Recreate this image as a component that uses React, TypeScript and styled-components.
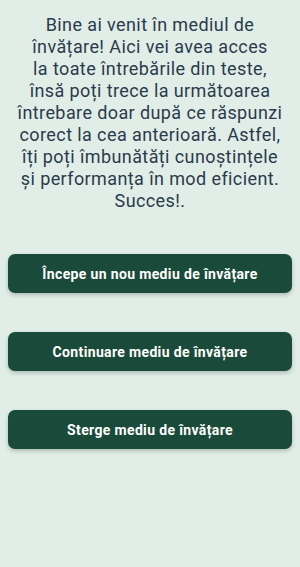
import React from 'react';
import styled, { createGlobalStyle } from 'styled-components';

const GlobalStyle = createGlobalStyle`
  html, body {
    margin: 0;
    padding: 0;
    background: #e0eee7;
  }
  body {
    font-family: Roboto, "Noto Sans", sans-serif;
  }
`;

const Screen = styled.div`
  width: 300px;
  min-height: 567px;
  background: #e0eee7;
  display: flex;
  flex-direction: column;
  box-sizing: border-box;
  padding: 14px 8px 0;
`;

const Intro = styled.p`
  margin: 0 0 42px;
  font-size: 18px;
  line-height: 22px;
  letter-spacing: 0.4px;
  color: #2b3a4c;
  text-align: center;
  white-space: nowrap;
`;

const Actions = styled.div`
  display: flex;
  flex-direction: column;
  gap: 39px;
`;

const ActionButton = styled.button`
  height: 39px;
  width: 100%;
  border: none;
  border-radius: 7px;
  background: #1a4b3a;
  color: #ffffff;
  font-family: Roboto, "Noto Sans", sans-serif;
  font-weight: 700;
  font-size: 14px;
  letter-spacing: 0.35px;
  box-shadow: 0 2px 4px rgba(0, 0, 0, 0.22);
  cursor: pointer;
`;

const introLines = [
  'Bine ai venit în mediul de',
  'învățare! Aici vei avea acces',
  'la toate întrebările din teste,',
  'însă poți trece la următoarea',
  'întrebare doar după ce răspunzi',
  'corect la cea anterioară. Astfel,',
  'îți poți îmbunătăți cunoștințele',
  'și performanța în mod eficient.',
  'Succes!.',
];

const labels = [
  'Începe un nou mediu de învățare',
  'Continuare mediu de învățare',
  'Sterge mediu de învățare',
];

const App: React.FC = () => {
  return (
    <Screen>
      <GlobalStyle />
      <Intro>
        {introLines.map((line, i) => (
          <React.Fragment key={i}>
            {line}
            {i < introLines.length - 1 && <br />}
          </React.Fragment>
        ))}
      </Intro>
      <Actions>
        {labels.map((label) => (
          <ActionButton key={label}>{label}</ActionButton>
        ))}
      </Actions>
    </Screen>
  );
};

export default App;
